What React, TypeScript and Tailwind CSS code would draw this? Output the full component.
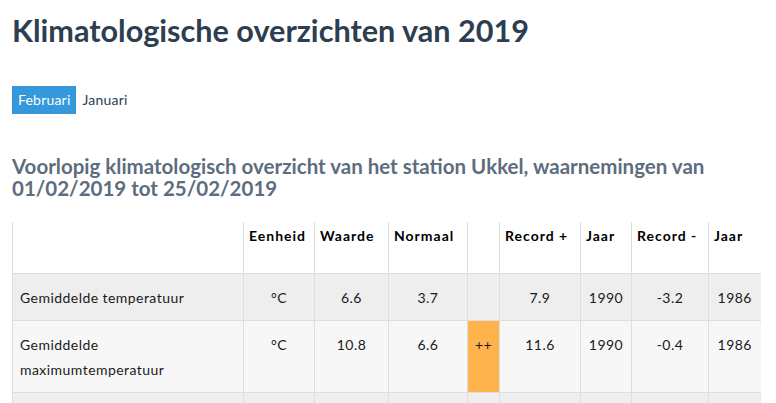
import React from "react";

type Row = {
  label: string;
  unit: string;
  value: string;
  normal: string;
  flag: string;
  recMax: string;
  recMaxYear: string;
  recMin: string;
  recMinYear: string;
};

const rows: Row[] = [
  {
    label: "Gemiddelde temperatuur",
    unit: "°C",
    value: "6.6",
    normal: "3.7",
    flag: "",
    recMax: "7.9",
    recMaxYear: "1990",
    recMin: "-3.2",
    recMinYear: "1986",
  },
  {
    label: "Gemiddelde maximumtemperatuur",
    unit: "°C",
    value: "10.8",
    normal: "6.6",
    flag: "++",
    recMax: "11.6",
    recMaxYear: "1990",
    recMin: "-0.4",
    recMinYear: "1986",
  },
  // next row only peeks in at the bottom edge
  {
    label: "",
    unit: "",
    value: "",
    normal: "",
    flag: "",
    recMax: "",
    recMaxYear: "",
    recMin: "",
    recMinYear: "",
  },
];

const headers = ["", "Eenheid", "Waarde", "Normaal", "", "Record +", "Jaar", "Record -", "Jaar"];
const widths = [231, 71, 74, 79, 32, 81, 51, 77, 52];

const cell =
  "border-l border-t border-[#dddddd] pt-[11px] pb-[10px] text-center align-top leading-[25px]";

export default function App() {
  return (
    <div
      className="min-h-screen bg-white px-[12px] pt-[14px]"
      style={{ fontFamily: "Lato, 'Open Sans', sans-serif" }}
    >
      <h1 className="text-[30.6px] font-bold leading-[33px] text-[#2c3e50]">
        Klimatologische overzichten van 2019
      </h1>

      <div className="mt-[39px] flex text-[14px] leading-[20px] tracking-[0.2px]">
        <button className="bg-[#3498db] px-[6px] py-[4px] text-white">Februari</button>
        <button className="px-[6px] py-[4px] text-[#2c3e50]">Januari</button>
      </div>

      <h2 className="mt-[41px] text-[20.5px] font-bold leading-[22px] text-[#5d6d7e]">
        Voorlopig klimatologisch overzicht van het station Ukkel, waarnemingen van 01/02/2019 tot 25/02/2019
      </h2>

      <table className="mt-[23px] w-[748px] table-fixed border-collapse text-[14px] tracking-[0.45px] text-[#1a1a1a]">
        <colgroup>
          {widths.map((w, i) => (
            <col key={i} style={{ width: w }} />
          ))}
        </colgroup>
        <thead>
          <tr className="h-[51px] bg-white">
            {headers.map((h, i) => (
              <th
                key={i}
                className="border-l border-[#dddddd] px-[5px] pt-[4px] text-left align-top font-bold leading-[20px] tracking-[1px] text-black"
              >
                {h}
              </th>
            ))}
          </tr>
        </thead>
        <tbody>
          {rows.map((r, i) => (
            <tr
              key={i}
              className={i % 2 === 0 ? "h-[47px] bg-[#eeeeee]" : "h-[47px] bg-[#f7f7f7]"}
            >
              <td className="border-l border-t border-[#dddddd] px-[7px] pt-[11px] pb-[10px] text-left align-top leading-[25px]">
                {r.label}
              </td>
              {[r.unit, r.value, r.normal].map((v, j) => (
                <td key={j} className={`${cell} px-[5px]`}>
                  {v}
                </td>
              ))}
              <td className={r.flag ? `${cell} bg-[#ffb34d] px-0` : `${cell} px-0`}>
                {r.flag}
              </td>
              {[r.recMax, r.recMaxYear, r.recMin, r.recMinYear].map((v, j) => (
                <td key={j} className={`${cell} px-[5px]`}>
                  {v}
                </td>
              ))}
            </tr>
          ))}
        </tbody>
      </table>
    </div>
  );
}
